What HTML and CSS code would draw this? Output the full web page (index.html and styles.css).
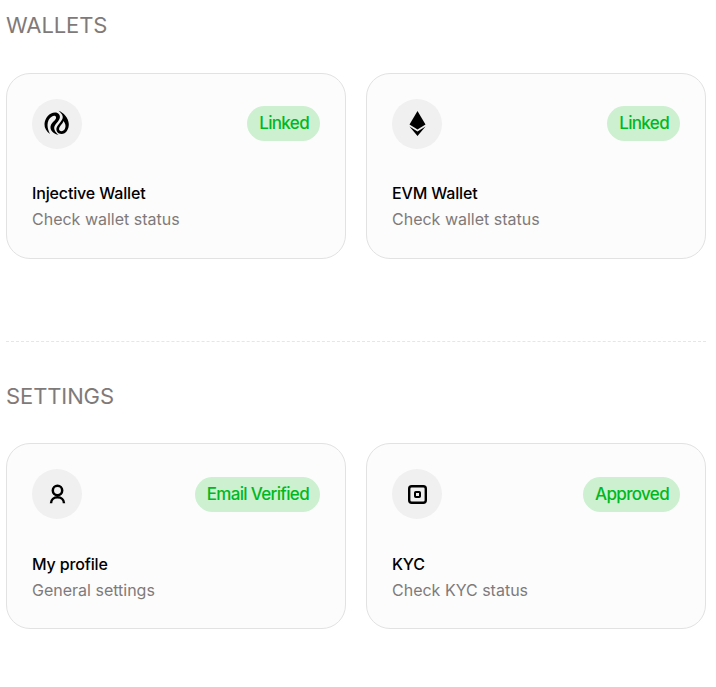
FILE: index.html
```html
<!DOCTYPE html>
<html lang="en">
<head>
    <meta charset="UTF-8">
    <title>Account</title>
    <link rel="stylesheet" href="styles.css">
</head>
<body>
    <div class="container">
        <h2 class="section-title">WALLETS</h2>
        <div class="card-grid">
            <div class="card">
                <div class="card-top">
                    <div class="icon-circle">
                        <svg width="28" height="28" viewBox="0 0 28 28">
                            <path d="M7 24C3.500 21.500 1.300 18 1.500 14 1.800 8 6.500 2.500 12 2.500 15.500 2.500 17.500 5 16.800 8 16.200 10.500 14 12.500 12.500 14.500 11 16.500 10.800 18.500 11.800 20.500 12.500 22 14 23.500 15.500 25 11.500 24 8 21.500 7.500 18 7.200 15.500 8.500 13.500 10.500 11.500 12 10 13.500 8.500 13 7 12.500 5.500 10.500 5.500 9 6.500 6 8.200 4.500 11.500 4.500 15 4.500 18 5.500 21 7 24Z" fill="#000"/>
                            <path fill-rule="evenodd" d="M15.500 0.800C20.500 2.500 25.500 8 25.800 14 26 19 23 24 18.500 24 15 24 12.800 21 13.500 18 14 15.800 16 14 17.500 12 19 10 20 8.500 19.700 6.500 19.300 4.200 17.500 2.500 15.500 0.800ZM20.500 11C22.500 13.500 23 16 22 18.500 21 20.800 18.500 21.700 17 20.800 15.500 19.800 16 17.800 17.300 16 18.500 14.500 19.800 13 20.500 11Z" fill="#000"/>
                        </svg>
                    </div>
                    <span class="badge">Linked</span>
                </div>
                <div class="card-title">Injective Wallet</div>
                <div class="card-sub">Check wallet status</div>
            </div>
            <div class="card">
                <div class="card-top">
                    <div class="icon-circle">
                        <svg width="28" height="28" viewBox="0 0 28 28">
                            <path d="M14.500 1 22.500 14.500 14.500 19.500 6.500 14.500Z" fill="#000"/>
                            <path d="M14.500 21.500 22.500 16.500 14.500 26 6.500 16.500Z" fill="#000"/>
                        </svg>
                    </div>
                    <span class="badge">Linked</span>
                </div>
                <div class="card-title">EVM Wallet</div>
                <div class="card-sub">Check wallet status</div>
            </div>
        </div>

        <div class="divider"></div>

        <h2 class="section-title">SETTINGS</h2>
        <div class="card-grid">
            <div class="card">
                <div class="card-top">
                    <div class="icon-circle">
                        <svg width="28" height="28" viewBox="0 0 28 28" fill="none" stroke="#000" stroke-width="2.500">
                            <circle cx="14.500" cy="10.500" r="4.700"/>
                            <path d="M8 23.300C8 19.500 11 17.300 14.500 17.300S21 19.500 21 23.300"/>
                        </svg>
                    </div>
                    <span class="badge">Email Verified</span>
                </div>
                <div class="card-title">My profile</div>
                <div class="card-sub">General settings</div>
            </div>
            <div class="card">
                <div class="card-top">
                    <div class="icon-circle">
                        <svg width="28" height="28" viewBox="0 0 28 28" fill="none" stroke="#000">
                            <rect x="6.200" y="6.200" width="16.600" height="16.600" rx="2.500" stroke-width="2.400"/>
                            <rect x="12" y="12" width="5" height="5" rx="0.800" stroke-width="2"/>
                        </svg>
                    </div>
                    <span class="badge">Approved</span>
                </div>
                <div class="card-title">KYC</div>
                <div class="card-sub">Check KYC status</div>
            </div>
        </div>
    </div>
</body>
</html>
```

FILE: styles.css
```css
body {
    font-family: Inter, "Liberation Sans", sans-serif;
    background-color: #fff;
    margin: 0;
    padding: 12.2px 10px 58px 6px;
}
.section-title {
    margin: 0 0 34.8px;
    font-size: 22px;
    line-height: 26px;
    font-weight: 400;
    color: #7f7a7a;
    letter-spacing: -0.1px;
}
.card-grid {
    display: grid;
    grid-template-columns: 1fr 1fr;
    gap: 20px;
}
.card {
    height: 186px;
    box-sizing: border-box;
    padding: 25px;
    background-color: #fcfcfc;
    border: 1px solid #e2e2e2;
    border-radius: 24px;
}
.card-top {
    display: flex;
    justify-content: space-between;
    align-items: center;
    margin-bottom: 32.3px;
}
.icon-circle {
    width: 50px;
    height: 50px;
    border-radius: 50%;
    background-color: #f0f0f0;
    display: flex;
    align-items: center;
    justify-content: center;
}
.badge {
    height: 35px;
    line-height: 34px;
    padding: 0 11px 0 12px;
    border-radius: 18px;
    background-color: #ccf0d0;
    color: #00b81f;
    font-size: 17px;
    font-weight: 450;
    letter-spacing: -0.66px;
    margin-top: -0.4px;
}
.card-title {
    font-size: 16px;
    font-weight: 450;
    line-height: 24px;
    color: #000;
    letter-spacing: -0.15px;
}
.card-sub {
    margin-top: 2px;
    font-size: 16px;
    line-height: 24px;
    color: #7f7a7a;
}
.divider {
    margin: 82px 0 40.6px;
    border-top: 1px dashed #e6e6e6;
}
```
